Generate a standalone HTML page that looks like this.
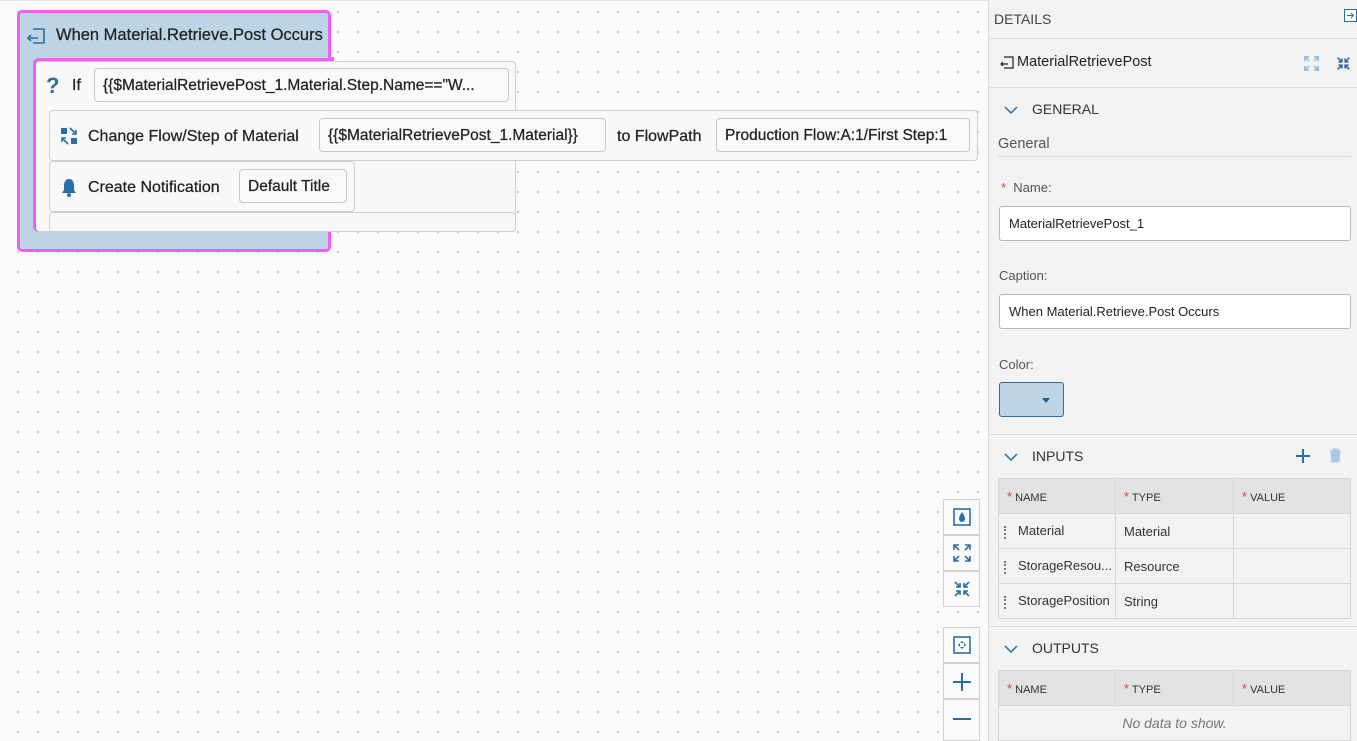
<!DOCTYPE html>
<html><head><style>
*{box-sizing:border-box;margin:0;padding:0}
body{width:1357px;height:741px;overflow:hidden;font-family:"Liberation Sans",sans-serif;background:#fafafa;position:relative;color:#222}
.canvas{position:absolute;left:0;top:0;width:988px;height:741px;background-color:#fafafa;
background-image:radial-gradient(circle,#c4c4c4 0.9px,transparent 1.2px);background-size:20px 20px;background-position:8px 1px;border-top:1px solid #e6e6e6}
.abs{position:absolute}
.blk{position:absolute;border:1px solid #cfcfcf;border-radius:4px;background:#f7f7f7}
.txt{position:absolute;font-size:16px;color:#222;white-space:nowrap;-webkit-text-stroke:0.25px #222}
.fld{position:absolute;border:1px solid #c8c8c8;border-radius:4px;background:#f9f9f9;font-size:15.5px;padding:0 8px;line-height:33px;height:34px;white-space:nowrap;-webkit-text-stroke:0.25px #222}
.panel{position:absolute;left:988px;top:0;width:369px;height:741px;background:#f2f2f2;border-left:1px solid #dcdcdc}
.hl{position:absolute;left:0;right:0;height:1px;background:#dcdcdc}
.lbl{position:absolute;font-size:13px;color:#555}
.inp{position:absolute;left:10px;width:352px;height:35px;background:#fff;border:1px solid #b9b9b9;border-radius:3px;font-size:13px;line-height:33px;padding-left:9px;color:#222}
.sec{position:absolute;left:43px;font-size:14px;color:#333}
.chev{position:absolute;left:14px;width:16px;height:10px}
table{position:absolute;left:9px;width:353px;border-collapse:collapse;font-size:13px}
td{border:1px solid #d6d6d6;height:35px;padding-left:8px;color:#333;background:#f2f2f2}
th{border:1px solid #d6d6d6;height:35px;background:#e2e2e2;font-weight:normal;text-align:left;padding-left:8px;font-size:11px;color:#333}
th b{color:#e8452c;font-weight:normal;font-size:13px}
.ctl{position:absolute;left:943px;width:37px;height:36px;border:1px solid #d2d2d2;background:#fafafa}
.grip{display:inline-block;width:2px;height:13px;border-left:2px dotted #777;margin-right:12px;vertical-align:middle;margin-left:-3px}
</style></head><body>
<div class="canvas"></div>

<div class="abs" style="left:17px;top:10px;width:314px;height:242px;background:#bcd4e3;border:3px solid #f25ef0;border-radius:5px"></div>
<div class="abs" style="left:33px;top:58px;width:300px;height:174px;background:#fafafa;border:3px solid #f25ef0;border-right:none;border-radius:6px 0 0 6px"></div>
<div class="abs" style="left:331px;top:57px;width:3px;height:4px;background:#f25ef0"></div>
<svg class="abs" style="left:27px;top:27px" width="20" height="18" viewBox="0 0 20 18"><path d="M6 2H17V16H6" fill="none" stroke="#2a6ea8" stroke-width="1.6"/><path d="M1 11H11M4 8L1 11L4 14" fill="none" stroke="#2a6ea8" stroke-width="1.6"/></svg>
<div class="txt" style="left:56px;top:26px;font-size:16.5px">When Material.Retrieve.Post Occurs</div>

<div class="blk" style="left:36px;top:61px;width:480px;height:171px;border-left:none;background:#f8f8f8"></div>
<div class="abs" style="left:46px;top:73px;font-size:22px;font-weight:bold;color:#2a6ea8">?</div>
<div class="txt" style="left:72px;top:77px">If</div>
<div class="fld" style="left:94px;top:68px;width:415px">{{$MaterialRetrievePost_1.Material.Step.Name=="W...</div>

<div class="blk" style="left:49px;top:110px;width:929px;height:51px;background:#f8f8f8"></div>
<svg class="abs" style="left:60px;top:127px" width="18" height="18" viewBox="0 0 18 18"><rect x="1" y="1" width="6" height="6" fill="#2a6ea8"/><rect x="11" y="11" width="6" height="6" fill="#2a6ea8"/><path d="M10 1L16 7M16 3V7H12" fill="none" stroke="#2a6ea8" stroke-width="1.6"/><path d="M8 17L2 11M2 15V11H6" fill="none" stroke="#2a6ea8" stroke-width="1.6"/></svg>
<div class="txt" style="left:88px;top:128px">Change Flow/Step of Material</div>
<div class="fld" style="left:319px;top:118px;width:287px">{{$MaterialRetrievePost_1.Material}}</div>
<div class="txt" style="left:617px;top:128px">to FlowPath</div>
<div class="fld" style="left:716px;top:118px;width:254px">Production Flow:A:1/First Step:1</div>

<div class="blk" style="left:49px;top:161px;width:306px;height:51px;background:#f8f8f8"></div>
<svg class="abs" style="left:60px;top:178px" width="18" height="19" viewBox="0 0 18 19"><path d="M9 1C5 1 4 5 4 8V12L2 15H16L14 12V8C14 5 13 1 9 1Z" fill="#2a6ea8"/><circle cx="9" cy="17" r="2" fill="#2a6ea8"/></svg>
<div class="txt" style="left:88px;top:179px">Create Notification</div>
<div class="fld" style="left:239px;top:169px;width:108px">Default Title</div>
<div class="blk" style="left:49px;top:212px;width:467px;height:20px;background:#f8f8f8"></div>

<div class="ctl" style="top:499px"><svg style="margin:8px 0 0 9px" width="18" height="18"><rect x="1" y="1" width="16" height="16" fill="none" stroke="#2a6ea8" stroke-width="1.6"/><path d="M9 4C7 7 6 9 6 11A3 3 0 0 0 12 11C12 9 11 7 9 4Z" fill="#2a6ea8"/></svg></div>
<div class="ctl" style="top:535px"><svg style="margin:8px 0 0 9px" width="18" height="18" viewBox="0 0 18 18" fill="none" stroke="#2a6ea8" stroke-width="1.6"><path d="M1 6V1H6M1 1L6 6M12 1H17V6M17 1L12 6M1 12V17H6M1 17L6 12M17 12V17H12M17 17L12 12"/></svg></div>
<div class="ctl" style="top:571px"><svg style="margin:8px 0 0 9px" width="18" height="18" viewBox="0 0 18 18" fill="none" stroke="#2a6ea8" stroke-width="1.6"><path d="M2 2L7 7M3 7H7V3M16 2L11 7M15 7H11V3M2 16L7 11M3 11H7V15M16 16L11 11M15 11H11V15"/></svg></div>
<div class="ctl" style="top:627px"><svg style="margin:8px 0 0 9px" width="18" height="18"><rect x="1" y="1" width="16" height="16" fill="none" stroke="#2a6ea8" stroke-width="1.6"/><path d="M9 5L7 7H11ZM9 13L7 11H11ZM5 9L7 7V11ZM13 9L11 7V11Z" fill="#2a6ea8"/></svg></div>
<div class="ctl" style="top:663px"><svg style="margin:8px 0 0 8px" width="20" height="20"><path d="M10 1V19M1 10H19" stroke="#2a6ea8" stroke-width="2"/></svg></div>
<div class="ctl" style="top:699px;height:42px"><svg style="margin:9px 0 0 8px" width="20" height="20"><path d="M1 10H19" stroke="#2a6ea8" stroke-width="2"/></svg></div>

<div class="panel">
 <div class="abs" style="left:5px;top:11px;font-size:14px;color:#444">DETAILS</div>
 <svg class="abs" style="left:355px;top:9px" width="13" height="13"><rect x="0.5" y="0.5" width="12" height="12" fill="#fff" stroke="#2a6ea8"/><path d="M3 6.5H9M7 4L9.5 6.5L7 9" fill="none" stroke="#2a6ea8"/></svg>
 <div class="hl" style="top:38px"></div>
 <svg class="abs" style="left:11px;top:56px" width="14" height="13" viewBox="0 0 14 13" fill="none" stroke="#222" stroke-width="1.2"><path d="M4 1H13V12H4M1 8H8M3 6L1 8L3 10"/></svg>
 <div class="abs" style="left:28px;top:54px;font-size:14.5px;color:#222">MaterialRetrievePost</div>
 <svg class="abs" style="left:315px;top:56px" width="15" height="15" viewBox="0 0 18 18" fill="none" stroke="#8ab8dc" stroke-width="1.8"><path d="M1 6V1H6M1 1L6 6M12 1H17V6M17 1L12 6M1 12V17H6M1 17L6 12M17 12V17H12M17 17L12 12"/></svg>
 <svg class="abs" style="left:347px;top:56px" width="15" height="15" viewBox="0 0 18 18" fill="none" stroke="#2a6ea8" stroke-width="2"><path d="M2 2L7 7M3 7H7V3M16 2L11 7M15 7H11V3M2 16L7 11M3 11H7V15M16 16L11 11M15 11H11V15"/></svg>
 <div class="hl" style="top:87px"></div>
 <svg class="chev" style="top:105px" viewBox="0 0 16 10"><path d="M2 2L8 8L14 2" fill="none" stroke="#2a6ea8" stroke-width="1.5"/></svg>
 <div class="sec" style="top:101px">GENERAL</div>
 <div class="abs" style="left:9px;top:136px;font-size:14.5px;color:#555">General</div>
 <div class="abs" style="left:9px;top:156px;width:353px;height:1px;background:#d6d6d6"></div>
 <div class="lbl" style="left:12px;top:180px"><span style="color:#e8452c">*</span>&nbsp; Name:</div>
 <div class="inp" style="top:206px">MaterialRetrievePost_1</div>
 <div class="lbl" style="left:10px;top:268px">Caption:</div>
 <div class="inp" style="top:294px">When Material.Retrieve.Post Occurs</div>
 <div class="lbl" style="left:10px;top:357px">Color:</div>
 <div class="abs" style="left:10px;top:382px;width:65px;height:35px;background:#bcd4e3;border:1px solid #2a6ea8;border-radius:3px"><svg style="position:absolute;left:42px;top:15px" width="8" height="5"><path d="M0 0H8L4 5Z" fill="#1f5a8c"/></svg></div>
 <div class="hl" style="top:434px"></div>
 <svg class="chev" style="top:452px" viewBox="0 0 16 10"><path d="M2 2L8 8L14 2" fill="none" stroke="#2a6ea8" stroke-width="1.5"/></svg>
 <div class="sec" style="top:448px">INPUTS</div>
 <svg class="abs" style="left:306px;top:448px" width="16" height="16"><path d="M8 1V15M1 8H15" stroke="#2a6ea8" stroke-width="2"/></svg>
 <svg class="abs" style="left:340px;top:448px" width="13" height="15" viewBox="0 0 13 15"><path d="M1 3H12M4 3V1H9V3M2 4H11L10 14H3Z" fill="#a9c8e2" stroke="#a9c8e2"/></svg>
 <table style="top:478px">
  <tr><th style="width:117px"><b>*</b> NAME</th><th style="width:118px"><b>*</b> TYPE</th><th><b>*</b> VALUE</th></tr>
  <tr><td><span class="grip"></span>Material</td><td>Material</td><td></td></tr>
  <tr><td style="white-space:nowrap"><span class="grip"></span>StorageResou...</td><td>Resource</td><td></td></tr>
  <tr><td style="white-space:nowrap"><span class="grip"></span>StoragePosition</td><td>String</td><td></td></tr>
 </table>
 <div class="hl" style="top:626px"></div>
 <svg class="chev" style="top:644px" viewBox="0 0 16 10"><path d="M2 2L8 8L14 2" fill="none" stroke="#2a6ea8" stroke-width="1.5"/></svg>
 <div class="sec" style="top:640px">OUTPUTS</div>
 <table style="top:670px">
  <tr><th style="width:117px"><b>*</b> NAME</th><th style="width:118px"><b>*</b> TYPE</th><th><b>*</b> VALUE</th></tr>
  <tr><td colspan="3" style="text-align:center;font-style:italic;color:#777;padding:0;font-size:14px">No data to show.</td></tr>
 </table>
</div>
</body></html>
